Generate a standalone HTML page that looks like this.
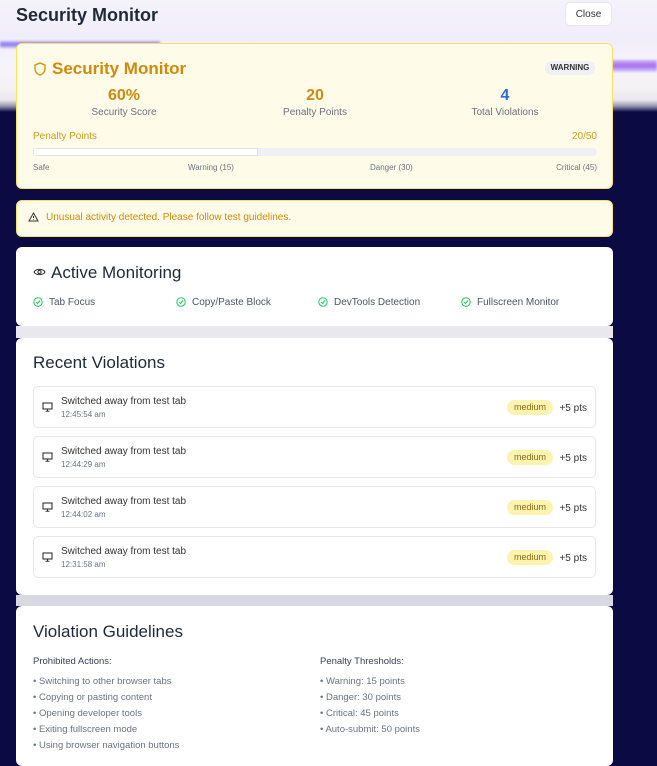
<!DOCTYPE html>
<html><head><meta charset="utf-8"><style>
*{box-sizing:border-box;margin:0;padding:0}
body{width:657px;height:749px;overflow:hidden;font-family:"Liberation Sans",sans-serif;background:#0b0a43;position:relative;color:#1f2937}
.bg1{position:absolute;left:0;top:0;width:657px;height:112px;background:linear-gradient(#f4f2fb 0,#f1eefb 38px,#f6f4fb 70px,#f3f1f2 90px,#e8e6ec 100px,#9a98b0 106px,#0b0a43 112px)}
.pbar{position:absolute;left:0;top:41px;width:160px;height:7px;background:linear-gradient(#c7b7f5,#8a78ee,#c9c4f5);filter:blur(1px)}
.pbar2{position:absolute;left:612px;top:60px;width:45px;height:12px;background:linear-gradient(#c8b3f5,#a46cf0,#dcd0f7);filter:blur(1px)}
.hdr{position:absolute;left:16px;top:5px;font-size:18px;font-weight:bold;color:#1f2937}
.close{position:absolute;left:565px;top:2px;width:47px;height:24px;border:1px solid #e5e7eb;border-radius:5px;background:#fff;font-size:10px;text-align:center;line-height:24px;color:#333}
.card{position:absolute;left:16px;width:597px;background:#fff;border-radius:6px}
.y{background:#fefbe8;border:1px solid #fce068}
.t{position:absolute;font-size:10px}
.h2{position:absolute;font-size:17px;color:#1f2937}
.muted{color:#6b7280}
.vi{position:absolute;left:17px;width:563px;height:42px;border:1px solid #e5e7eb;border-radius:5px;background:#fff}
.badge{position:absolute;right:42px;top:13px;width:46px;height:15px;border-radius:8px;background:#fdf3b0;color:#8a6a10;font-size:9px;text-align:center;line-height:15px}
</style></head><body>
<div class="bg1"></div><div class="pbar"></div><div class="pbar2"></div>
<div class="hdr">Security Monitor</div>
<div class="close">Close</div>

<div class="card y" style="top:43px;height:146px">
 <svg style="position:absolute;left:17px;top:18px" width="12" height="14" viewBox="0 0 12 14"><path d="M6 1 L11 3 V7 C11 10 8.5 12 6 13 C3.5 12 1 10 1 7 V3 Z" fill="none" stroke="#d4900d" stroke-width="1.3"/></svg>
 <div class="h2" style="left:35px;top:15px;color:#cf8a0c;font-weight:bold;font-size:17px">Security Monitor</div>
 <div class="t" style="left:528px;top:17px;width:50px;height:14px;border-radius:7px;background:#eef0f5;font-size:8px;font-weight:bold;text-align:center;line-height:14px;color:#333">WARNING</div>
 <div class="t" style="left:57px;top:43px;width:100px;text-align:center;font-size:16px;font-weight:bold;color:#cf8a0c">60%</div>
 <div class="t muted" style="left:57px;top:63px;width:100px;text-align:center">Security Score</div>
 <div class="t" style="left:248px;top:43px;width:100px;text-align:center;font-size:16px;font-weight:bold;color:#cf8a0c">20</div>
 <div class="t muted" style="left:248px;top:63px;width:100px;text-align:center">Penalty Points</div>
 <div class="t" style="left:438px;top:43px;width:100px;text-align:center;font-size:16px;font-weight:bold;color:#2f6be0">4</div>
 <div class="t muted" style="left:438px;top:63px;width:100px;text-align:center">Total Violations</div>
 <div class="t" style="left:16px;top:87px;color:#d49a1a">Penalty Points</div>
 <div class="t" style="right:15px;top:87px;color:#d49a1a">20/50</div>
 <div style="position:absolute;left:16px;top:104px;width:564px;height:8px;border-radius:4px;background:#eef0f5;overflow:hidden"><div style="width:225px;height:8px;background:#fff;border:1px solid #e3e3e3"></div></div>
 <div class="t muted" style="left:16px;top:119px;font-size:8px">Safe</div>
 <div class="t muted" style="left:171px;top:119px;font-size:8px">Warning (15)</div>
 <div class="t muted" style="left:353px;top:119px;font-size:8px">Danger (30)</div>
 <div class="t muted" style="right:15px;top:119px;font-size:8px">Critical (45)</div>
</div>

<div class="card y" style="top:200px;height:37px">
 <svg style="position:absolute;left:11px;top:11px" width="11" height="10" viewBox="0 0 11 10"><path d="M5.5 1 L10 9 H1 Z M5.5 4 V6 M5.5 7.3 V7.8" fill="none" stroke="#333" stroke-width="1"/></svg>
 <div class="t" style="left:29px;top:11px;color:#cf8a0c">Unusual activity detected. Please follow test guidelines.</div>
</div>

<div class="card" style="top:247px;height:79px">
 <svg style="position:absolute;left:17px;top:20px" width="13" height="10" viewBox="0 0 13 10"><path d="M1 5 C3 1.5 10 1.5 12 5 C10 8.5 3 8.5 1 5 Z" fill="none" stroke="#333" stroke-width="1.1"/><circle cx="6.5" cy="5" r="1.6" fill="none" stroke="#333" stroke-width="1.1"/></svg>
 <div class="h2" style="left:35px;top:16px">Active Monitoring</div>
 <svg style="position:absolute;left:17px;top:50px" width="10" height="10"><circle cx="5" cy="5" r="4.2" fill="none" stroke="#22c55e" stroke-width="1"/><path d="M3 5 L4.5 6.5 L7 3.5" fill="none" stroke="#22c55e" stroke-width="1"/></svg>
 <div class="t" style="left:33px;top:50px;color:#4b5563">Tab Focus</div>
 <svg style="position:absolute;left:160px;top:50px" width="10" height="10"><circle cx="5" cy="5" r="4.2" fill="none" stroke="#22c55e" stroke-width="1"/><path d="M3 5 L4.5 6.5 L7 3.5" fill="none" stroke="#22c55e" stroke-width="1"/></svg>
 <div class="t" style="left:176px;top:50px;color:#4b5563">Copy/Paste Block</div>
 <svg style="position:absolute;left:302px;top:50px" width="10" height="10"><circle cx="5" cy="5" r="4.2" fill="none" stroke="#22c55e" stroke-width="1"/><path d="M3 5 L4.5 6.5 L7 3.5" fill="none" stroke="#22c55e" stroke-width="1"/></svg>
 <div class="t" style="left:318px;top:50px;color:#4b5563">DevTools Detection</div>
 <svg style="position:absolute;left:445px;top:50px" width="10" height="10"><circle cx="5" cy="5" r="4.2" fill="none" stroke="#22c55e" stroke-width="1"/><path d="M3 5 L4.5 6.5 L7 3.5" fill="none" stroke="#22c55e" stroke-width="1"/></svg>
 <div class="t" style="left:461px;top:50px;color:#4b5563">Fullscreen Monitor</div>
</div>
<div style="position:absolute;left:16px;top:326px;width:597px;height:12px;background:#e8e8ee"></div>

<div class="card" style="top:338px;height:257px">
 <div class="h2" style="left:17px;top:15px">Recent Violations</div>
 <div class="vi" style="top:48px"><svg style="position:absolute;left:8px;top:15px" width="11" height="10" viewBox="0 0 11 10"><rect x="1" y="1" width="9" height="6" fill="none" stroke="#333" stroke-width="1.1"/><path d="M5.5 7 V9 M3.5 9.3 H7.5" stroke="#333"/></svg><div class="t" style="left:27px;top:9px;color:#333">Switched away from test tab</div><div class="t muted" style="left:27px;top:23px;font-size:8px">12:45:54 am</div><div class="badge">medium</div><div class="t" style="right:8px;top:16px;color:#333">+5 pts</div></div>
 <div class="vi" style="top:98px"><svg style="position:absolute;left:8px;top:15px" width="11" height="10" viewBox="0 0 11 10"><rect x="1" y="1" width="9" height="6" fill="none" stroke="#333" stroke-width="1.1"/><path d="M5.5 7 V9 M3.5 9.3 H7.5" stroke="#333"/></svg><div class="t" style="left:27px;top:9px;color:#333">Switched away from test tab</div><div class="t muted" style="left:27px;top:23px;font-size:8px">12:44:29 am</div><div class="badge">medium</div><div class="t" style="right:8px;top:16px;color:#333">+5 pts</div></div>
 <div class="vi" style="top:148px"><svg style="position:absolute;left:8px;top:15px" width="11" height="10" viewBox="0 0 11 10"><rect x="1" y="1" width="9" height="6" fill="none" stroke="#333" stroke-width="1.1"/><path d="M5.5 7 V9 M3.5 9.3 H7.5" stroke="#333"/></svg><div class="t" style="left:27px;top:9px;color:#333">Switched away from test tab</div><div class="t muted" style="left:27px;top:23px;font-size:8px">12:44:02 am</div><div class="badge">medium</div><div class="t" style="right:8px;top:16px;color:#333">+5 pts</div></div>
 <div class="vi" style="top:198px"><svg style="position:absolute;left:8px;top:15px" width="11" height="10" viewBox="0 0 11 10"><rect x="1" y="1" width="9" height="6" fill="none" stroke="#333" stroke-width="1.1"/><path d="M5.5 7 V9 M3.5 9.3 H7.5" stroke="#333"/></svg><div class="t" style="left:27px;top:9px;color:#333">Switched away from test tab</div><div class="t muted" style="left:27px;top:23px;font-size:8px">12:31:58 am</div><div class="badge">medium</div><div class="t" style="right:8px;top:16px;color:#333">+5 pts</div></div>
</div>
<div style="position:absolute;left:16px;top:595px;width:597px;height:11px;background:#d9d9e3"></div>

<div class="card" style="top:606px;height:160px">
 <div class="h2" style="left:17px;top:16px">Violation Guidelines</div>
 <div class="t" style="left:17px;top:50px;font-size:9.5px;color:#374151">Prohibited Actions:</div>
 <div class="t muted" style="left:17px;top:68px;font-size:9.5px;line-height:16px">• Switching to other browser tabs<br>• Copying or pasting content<br>• Opening developer tools<br>• Exiting fullscreen mode<br>• Using browser navigation buttons</div>
 <div class="t" style="left:304px;top:50px;font-size:9.5px;color:#374151">Penalty Thresholds:</div>
 <div class="t muted" style="left:304px;top:68px;font-size:9.5px;line-height:16px">• Warning: 15 points<br>• Danger: 30 points<br>• Critical: 45 points<br>• Auto-submit: 50 points</div>
</div>
</body></html>
